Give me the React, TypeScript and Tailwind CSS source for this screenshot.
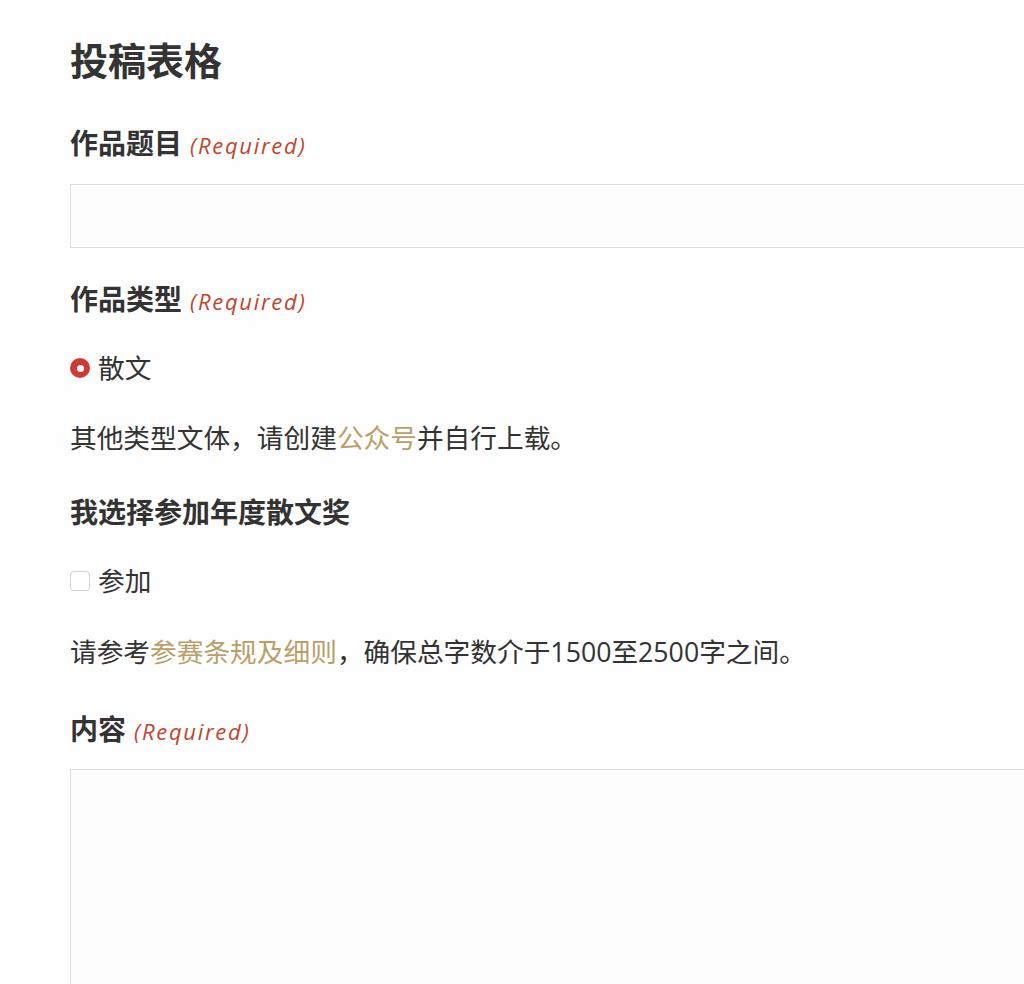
import React from "react";

const FONT = "font-['Open_Sans','Noto_Sans_CJK_SC',sans-serif]";

function Required() {
  return (
    <span className="ml-2 align-baseline text-[22px] font-normal italic tracking-[1.7px] text-[#c0452d]">
      (Required)
    </span>
  );
}

export default function App() {
  return (
    <div className={`w-screen min-h-[984px] overflow-hidden bg-[#fefefe] text-[#333333] ${FONT}`}>
      <div className="pl-[70px]">
        <h1 className="mt-[37px] text-[38px] font-bold leading-[46px] text-[#333333]">投稿表格</h1>

        <div className="mt-[40px] text-[28px] font-bold leading-[40px]">
          作品题目
          <Required />
        </div>
        <input
          type="text"
          className="mt-[19px] block h-[64px] w-[1000px] border border-[#dddddd] bg-[#fdfdfd] outline-none"
        />

        <div className="mt-[31px] text-[28px] font-bold leading-[40px]">
          作品类型
          <Required />
        </div>

        <div className="mt-[27px] flex h-[40px] items-center gap-[8px] text-[26.7px] leading-[40px]">
          <span className="flex h-[20px] w-[20px] items-center justify-center rounded-full bg-[#d03a35]">
            <span className="h-[7px] w-[7px] rounded-full bg-white" />
          </span>
          <span>散文</span>
        </div>

        <p className="mt-[30px] text-[26.7px] leading-[40px]">
          其他类型文体，请创建<span className="text-[#b9a06a]">公众号</span>并自行上载。
        </p>

        <div className="mt-[34px] text-[28px] font-bold leading-[40px]">我选择参加年度散文奖</div>

        <div className="mt-[29px] flex h-[40px] items-center gap-[8px] text-[26.7px] leading-[40px]">
          <span className="block h-[20px] w-[20px] rounded-[4px] border border-[#d2d2d2] bg-white" />
          <span>参加</span>
        </div>

        <p className="mt-[31px] text-[26.7px] leading-[40px]">
          请参考<span className="text-[#b9a06a]">参赛条规及细则</span>，确保总字数介于1500至2500字之间。
        </p>

        <div className="mt-[37px] text-[28px] font-bold leading-[40px]">
          内容
          <Required />
        </div>
        <textarea className="mt-[18px] block h-[400px] w-[1000px] resize-none border border-[#dddddd] bg-[#fdfdfd] outline-none" />
      </div>
    </div>
  );
}
